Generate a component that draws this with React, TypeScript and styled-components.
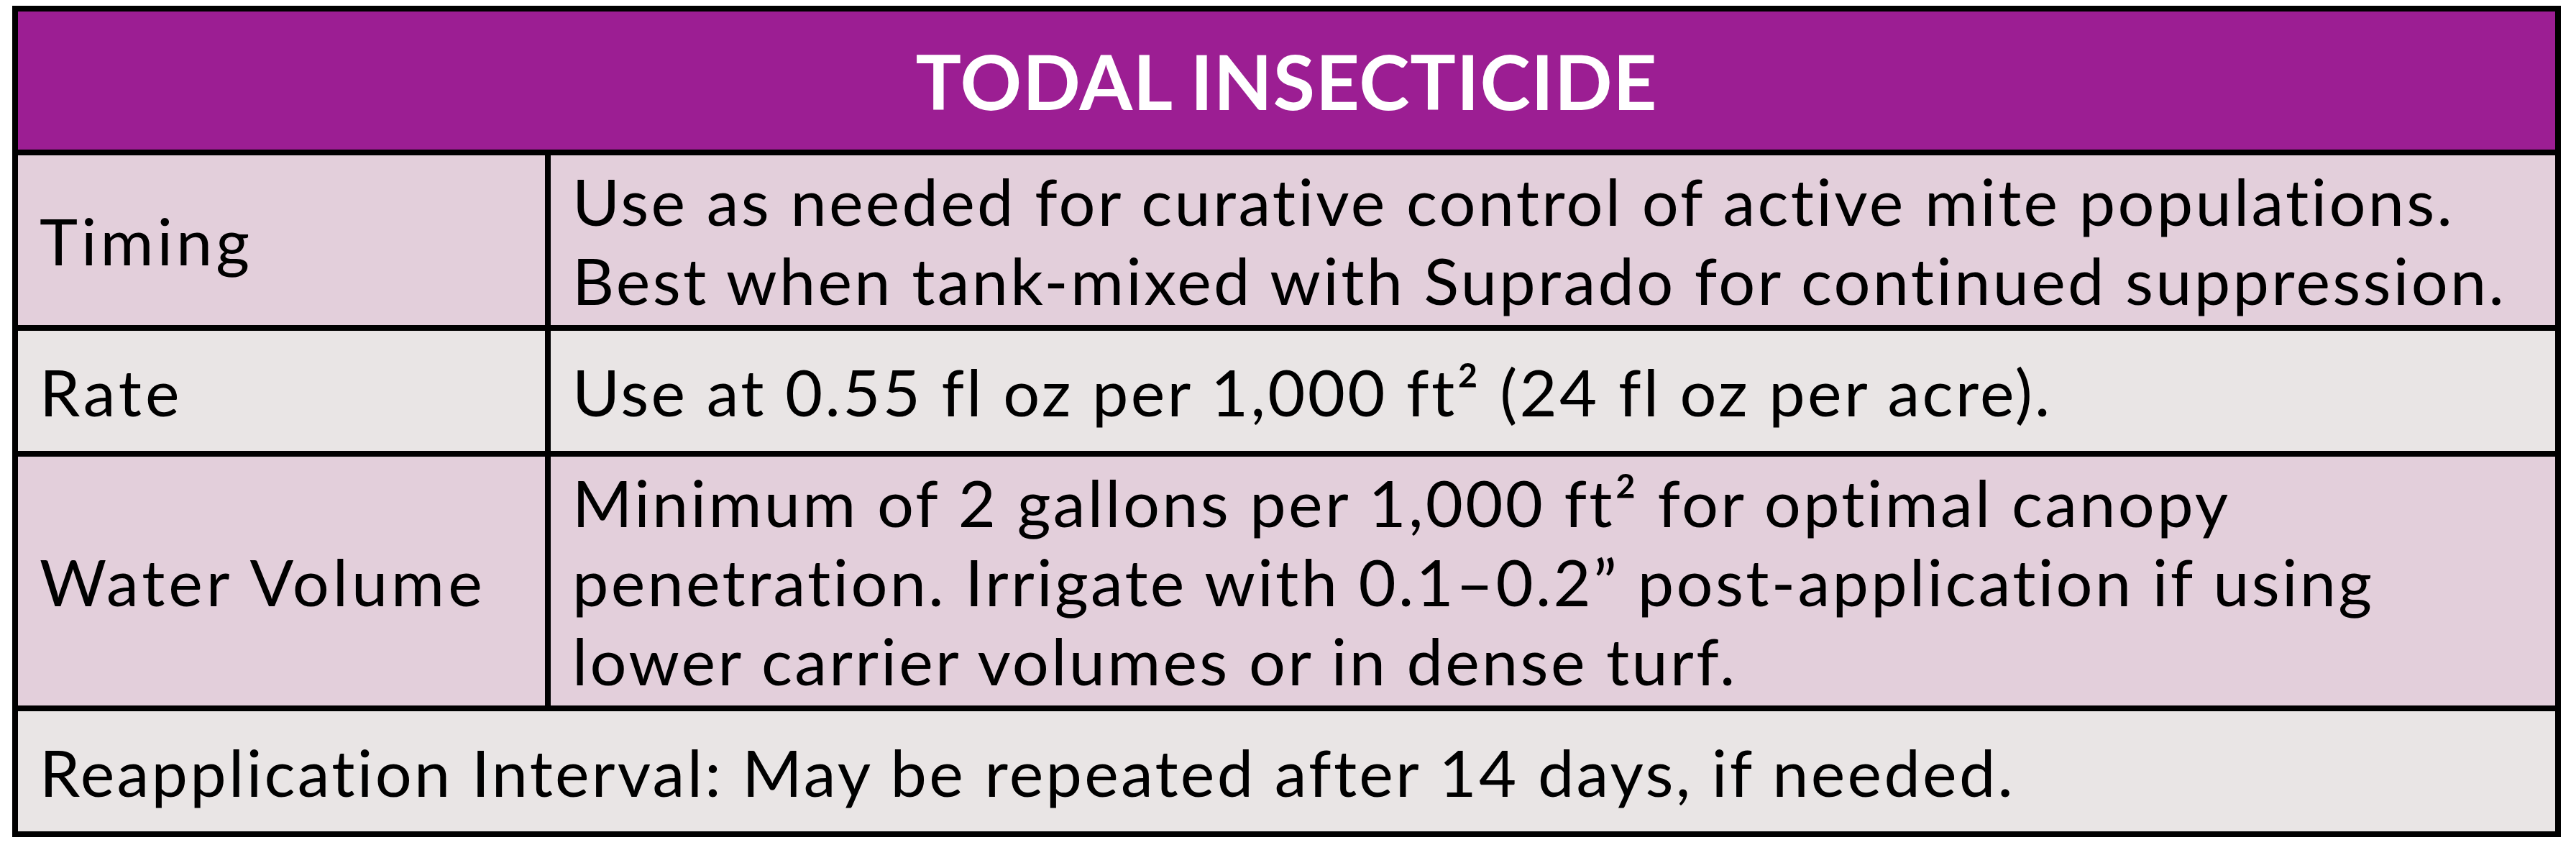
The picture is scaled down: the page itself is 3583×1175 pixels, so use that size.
import styled, { createGlobalStyle } from 'styled-components'

const GlobalStyle = createGlobalStyle`
    html, body {
        margin: 0;
        padding: 0;
        background: #FFFFFF;
    }
    body {
        font-family: Lato, "Open Sans", "Liberation Sans", sans-serif;
        color: #000000;
    }
`

const Page = styled.div`
    padding: 8px 0 0 17px;
`

const Table = styled.section`
    width: 3545px;
    box-sizing: border-box;
    display: grid;
    grid-template-columns: 733px 1fr;
    gap: 8px;
    border: 8px solid #000000;
    background: #000000;
`

const Title = styled.h1`
    grid-column: 1 / -1;
    margin: 0;
    min-height: 192px;
    display: flex;
    align-items: center;
    justify-content: center;
    background: #9C1E93;
    color: #FFFFFF;
    font-size: 106px;
    font-weight: 700;
    letter-spacing: 1px;
`

const Cell = styled.div<{ $tone: 'pink' | 'grey'; $span?: boolean; $label?: boolean }>`
    grid-column: ${p => (p.$span ? '1 / -1' : 'auto')};
    box-sizing: border-box;
    min-height: 167px;
    padding: 8px 30px;
    display: flex;
    align-items: center;
    background: ${p => (p.$tone === 'pink' ? '#E3CFDB' : '#E9E5E5')};
    font-size: 90px;
    line-height: 110px;
    letter-spacing: ${p => (p.$label ? '5px' : '3.3px')};
    p {
        margin: 0;
        white-space: nowrap;
    }
`

const rows: { label: string; lines: string[]; tone: 'pink' | 'grey' }[] = [
    {
        label: 'Timing',
        lines: [
            'Use as needed for curative control of active mite populations.',
            'Best when tank-mixed with Suprado for continued suppression.',
        ],
        tone: 'pink',
    },
    {
        label: 'Rate',
        lines: ['Use at 0.55 fl oz per 1,000 ft² (24 fl oz per acre).'],
        tone: 'grey',
    },
    {
        label: 'Water Volume',
        lines: [
            'Minimum of 2 gallons per 1,000 ft² for optimal canopy',
            'penetration. Irrigate with 0.1–0.2” post-application if using',
            'lower carrier volumes or in dense turf.',
        ],
        tone: 'pink',
    },
]

const App = () => {
    return (
        <Page>
            <GlobalStyle />
            <Table>
                <Title>TODAL INSECTICIDE</Title>
                {rows.map(row => (
                    <>
                        <Cell key={row.label} $tone={row.tone} $label>{row.label}</Cell>
                        <Cell key={row.label + '-text'} $tone={row.tone}>
                            <div>
                                {row.lines.map(line => (
                                    <p key={line}>{line}</p>
                                ))}
                            </div>
                        </Cell>
                    </>
                ))}
                <Cell $tone="grey" $span>
                    Reapplication Interval: May be repeated after 14 days, if needed.
                </Cell>
            </Table>
        </Page>
    )
}

export default App
